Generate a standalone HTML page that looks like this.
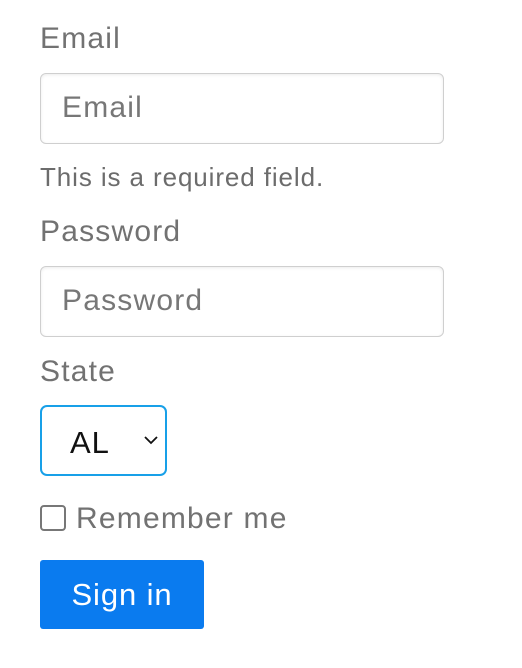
<!DOCTYPE html>
<html><head><style>
body{margin:0;background:#fff;font-family:"Liberation Sans",Arial,sans-serif;color:#707070;}
.a{position:absolute;white-space:nowrap;}
.lbl{font-size:30px;letter-spacing:1.2px;color:#727272;}
.inp{position:absolute;left:40px;width:404px;height:71px;border:1.5px solid #cfcfcf;border-radius:6px;box-shadow:inset 0 1px 3px rgba(0,0,0,.08);box-sizing:border-box;}
.ph{position:absolute;left:21px;top:17px;font-size:30px;letter-spacing:1.2px;color:#777;}
</style></head><body>
<div class="a lbl" style="left:40px;top:22px">Email</div>
<div class="inp" style="top:73px"><span class="ph">Email</span></div>
<div class="a" style="left:40px;top:162px;font-size:26px;letter-spacing:0.9px;color:#6c6c6c">This is a required field.</div>
<div class="a lbl" style="left:40px;top:215px">Password</div>
<div class="inp" style="top:266px"><span class="ph">Password</span></div>
<div class="a lbl" style="left:40px;top:355px">State</div>
<div class="a" style="left:40px;top:405px;width:127px;height:71px;border:2px solid #18a0e8;border-radius:7px;box-sizing:border-box;">
<span style="position:absolute;left:28px;top:18px;font-size:31px;letter-spacing:1px;color:#111">AL</span>
<svg style="position:absolute;left:101px;top:28px" width="16" height="10" viewBox="0 0 16 10"><path d="M2 2 L8 8 L14 2" fill="none" stroke="#111" stroke-width="1.8"/></svg>
</div>
<div class="a" style="left:40px;top:505px;width:26px;height:26px;border:2px solid #777;border-radius:4px;box-sizing:border-box"></div>
<div class="a lbl" style="left:76px;top:502px">Remember me</div>
<div class="a" style="left:40px;top:560px;width:164px;height:69px;background:#0a7bef;border-radius:3px;color:#fff;font-size:31px;letter-spacing:0.9px;text-align:center;line-height:69px">Sign in</div>
</body></html>
